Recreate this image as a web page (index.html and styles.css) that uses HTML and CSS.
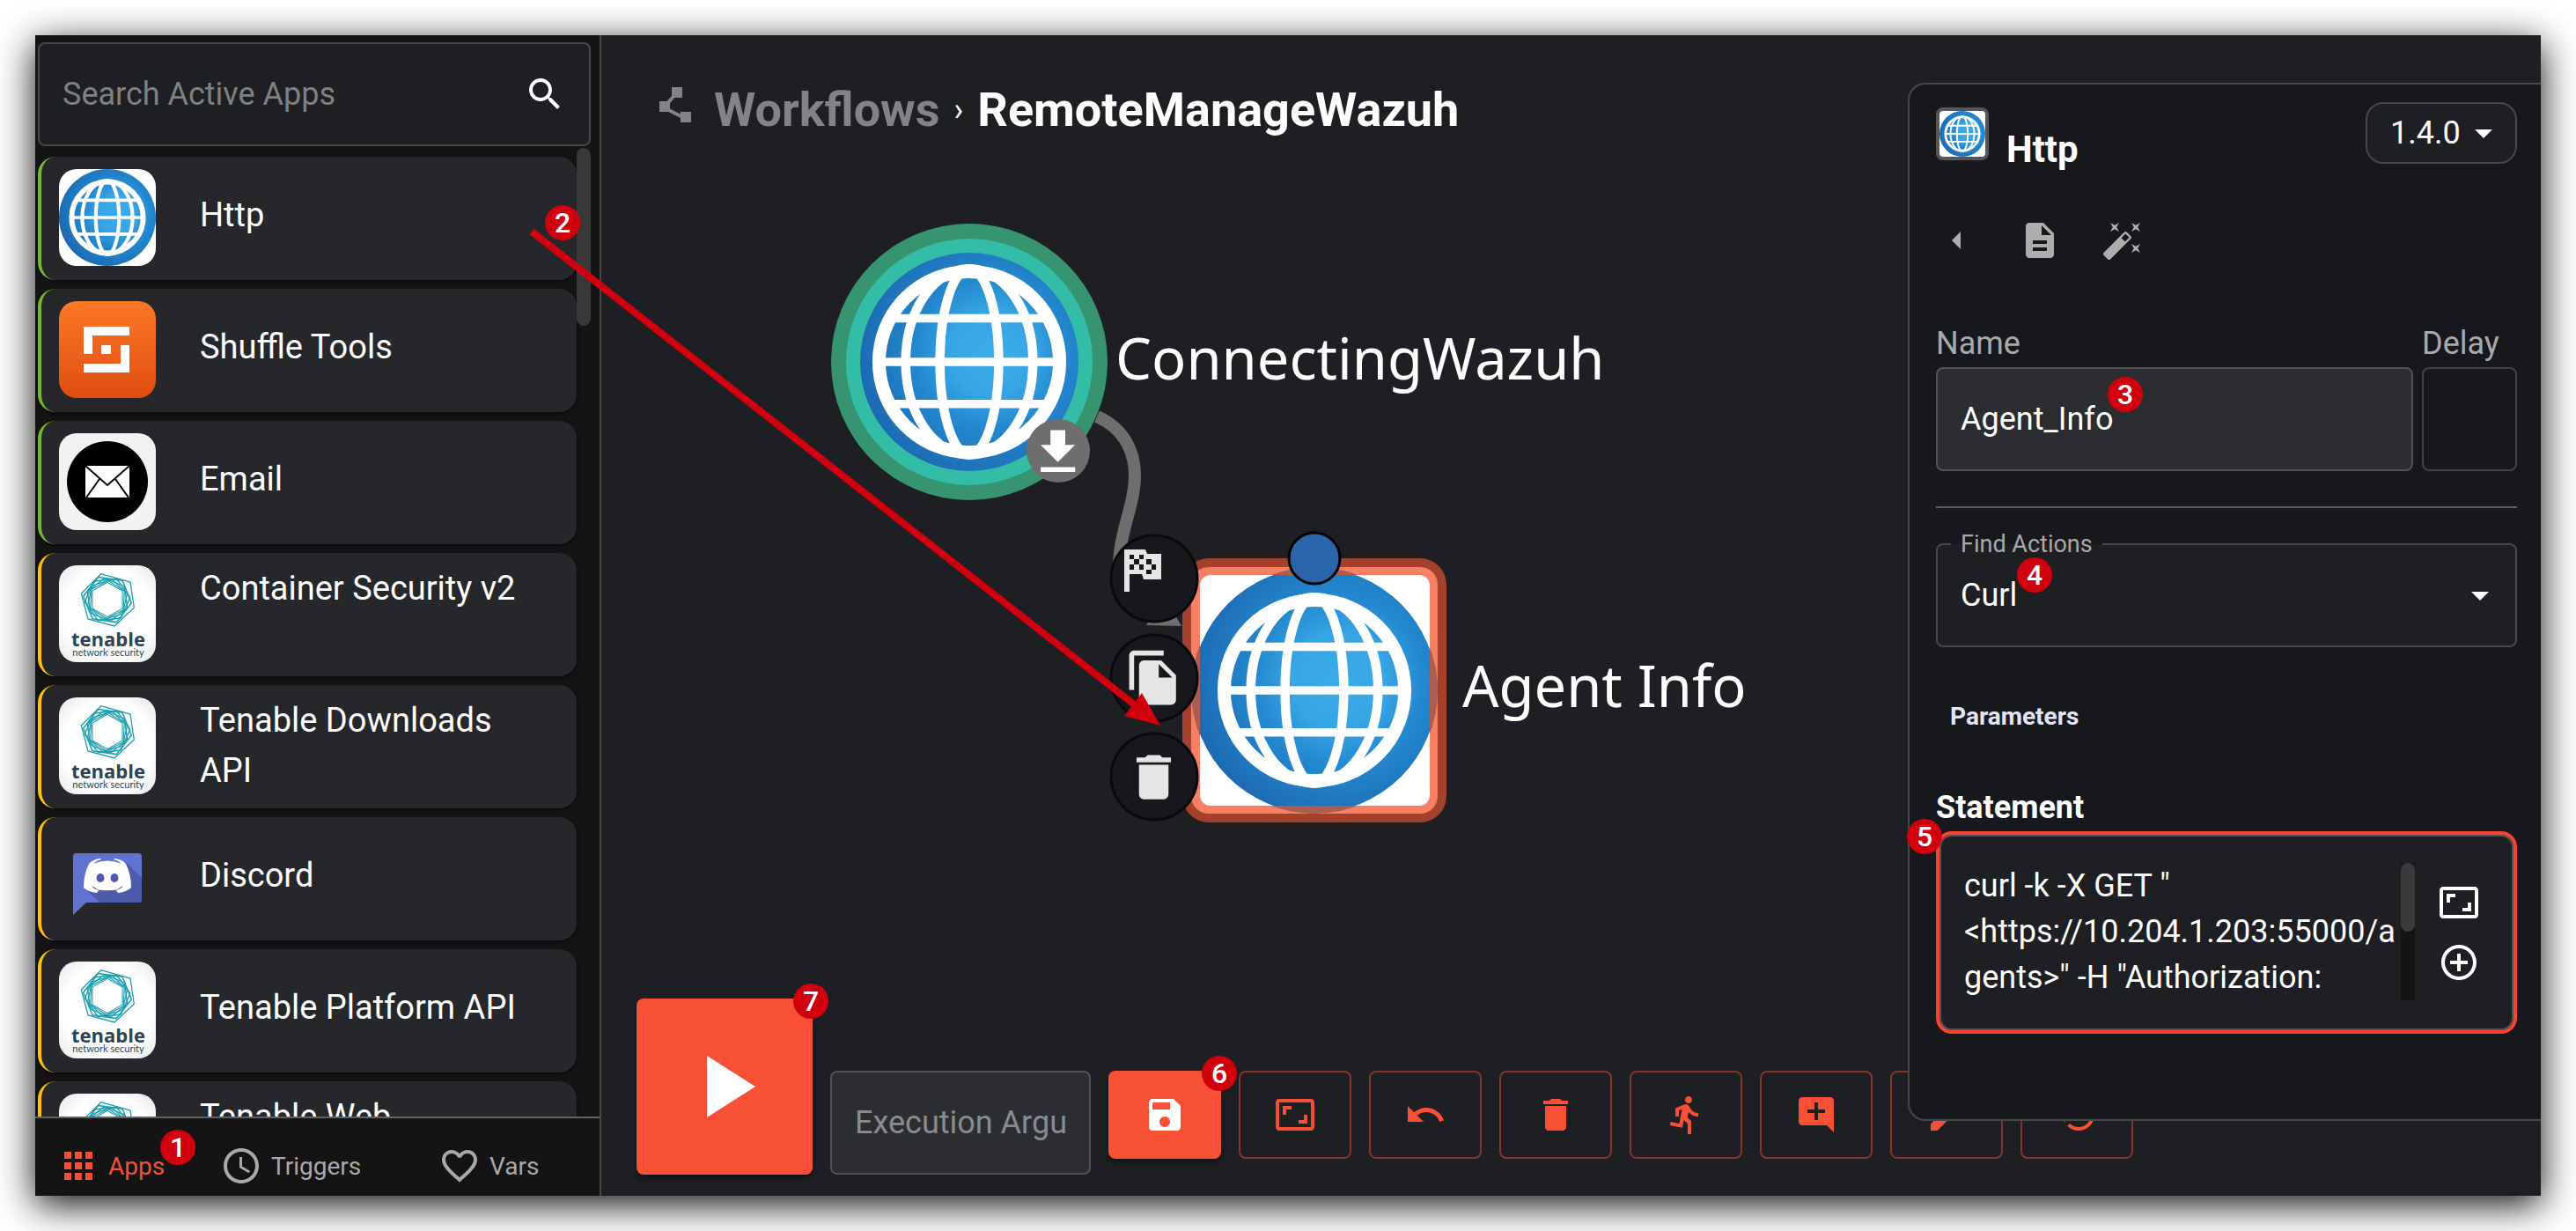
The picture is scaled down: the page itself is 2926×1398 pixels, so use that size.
FILE: index.html
```html
<!DOCTYPE html>
<html lang="en">
<head>
<meta charset="utf-8">
<title>RemoteManageWazuh - Workflows</title>
<link rel="stylesheet" href="styles.css">
</head>
<body>
<svg class="defs" aria-hidden="true">
  <defs>
    <radialGradient id="globe-fill" cx="0.6" cy="0.46" r="0.62">
      <stop offset="0" stop-color="#3aabe9"/>
      <stop offset="0.3" stop-color="#38a6e5"/>
      <stop offset="0.55" stop-color="#2389cf"/>
      <stop offset="1" stop-color="#1c68b0"/>
    </radialGradient>
    <linearGradient id="shuffle-fill" x1="0" y1="0" x2="0" y2="1">
      <stop offset="0" stop-color="#fb7926"/>
      <stop offset="1" stop-color="#e04d12"/>
    </linearGradient>
    <radialGradient id="tenable-fill" r="0.75">
      <stop offset="0.6" stop-color="#ffffff"/>
      <stop offset="1" stop-color="#e2e2e2"/>
    </radialGradient>
    <symbol id="globe-lines" viewBox="0 0 100 100">
      <g fill="none" stroke="#fff">
        <circle cx="50" cy="50" r="36.9" stroke-width="5.4"/>
        <path stroke-width="3.4" d="M14 50H86M18 32.2H82M18 67.2H82"/>
        <ellipse cx="50" cy="50" rx="12" ry="38" stroke-width="3.8"/>
        <ellipse cx="50" cy="50" rx="26" ry="38" stroke-width="3.8"/>
      </g>
    </symbol>
    <symbol id="globe" viewBox="0 0 100 100">
      <rect width="100" height="100" fill="#fff"/>
      <circle cx="50" cy="50" r="50" fill="url(#globe-fill)"/>
      <use href="#globe-lines"/>
    </symbol>
    <symbol id="shuffle" viewBox="0 0 110 110">
      <rect width="110" height="110" fill="url(#shuffle-fill)"/>
      <path fill="#fff" d="M28 29H80V39H38V60H28ZM48 50H59V60H48ZM70 50H80V81H28V71H70Z"/>
    </symbol>
    <symbol id="email" viewBox="0 0 110 110">
      <rect width="110" height="110" fill="#f2f2f2"/>
      <circle cx="55" cy="55" r="46"/>
      <path fill="#fff" d="M30 37H80V73H30Z"/>
      <path fill="none" stroke="#000" stroke-width="2" d="M30 37L55 59L80 37M31 73L46 52M79 73L64 52"/>
    </symbol>
    <symbol id="tenable" viewBox="0 0 110 110">
      <rect width="110" height="110" fill="url(#tenable-fill)"/>
      <g fill="none" stroke="#1b9fb0" stroke-width="1.3" transform="translate(55 39)">
        <path d="M0 -24L20.800 -12V12L0 24L-20.800 12V-12Z" transform="scale(.82)"/>
        <path d="M0 -24L20.800 -12V12L0 24L-20.800 12V-12Z" transform="rotate(3) scale(.9)"/>
        <path d="M0 -24L20.800 -12V12L0 24L-20.800 12V-12Z" transform="rotate(13) scale(.98)"/>
        <path d="M0 -24L20.800 -12V12L0 24L-20.800 12V-12Z" transform="rotate(-8) scale(1.020)"/>
        <path d="M0 -24L20.800 -12V12L0 24L-20.800 12V-12Z" transform="rotate(24) scale(1.080)"/>
        <path d="M0 -24L20.800 -12V12L0 24L-20.800 12V-12Z" transform="rotate(-22) scale(1.150)"/>
        <path d="M-7.300 -29.300L26 -20L30.300 9L8 30L-22 22L-29.700 -7Z"/>
      </g>
      <text class="tenable-name" x="56" y="92" text-anchor="middle">tenable</text>
      <text class="tenable-tag" x="56" y="103" text-anchor="middle">network security</text>
    </symbol>
    <symbol id="discord" viewBox="0 0 110 110">
      <path fill="#6272d1" d="M20 27H90Q94 27 94 31V79Q94 83 90 83H31L16 97V31Q16 27 20 27Z"/>
      <path fill="#4e5ba9" d="M76 37L94 55V79Q94 83 90 83H46L33 70Z"/>
      <path fill="#fff" d="M34 39Q38 34 47 33L48 34Q43 35 39 39Q55 32 71 39Q67 35 62 34L63 33Q72 34 76 39Q82 51 82 66Q77 71 67 72L65 69Q70 68 73 64Q65 68 55 68Q45 68 37 64Q40 68 45 69L43 72Q33 71 28 66Q28 51 34 39Z"/>
      <path fill="#fff" d="M36 62H74L66 68.500Q55 70 44 68.500Z"/>
      <g fill="#4e5ba9"><ellipse cx="47" cy="55" rx="4.500" ry="5"/><ellipse cx="63" cy="55" rx="4.500" ry="5"/></g>
    </symbol>
    <symbol id="aspect" viewBox="0 0 24 24"><path d="M19 12h-2v3h-3v2h5v-5zM7 9h3V7H5v5h2V9zm14-6H3c-1.100 0-2 .9-2 2v14c0 1.100.9 2 2 2h18c1.100 0 2-.9 2-2V5c0-1.100-.9-2-2-2zm0 16.010H3V4.990h18v14.020z"/></symbol>
    <symbol id="trash" viewBox="0 0 24 24"><path d="M6 19c0 1.100.9 2 2 2h8c1.100 0 2-.9 2-2V7H6v12zM19 4h-3.500l-1-1h-5l-1 1H5v2h14V4z"/></symbol>
    <symbol id="caret" viewBox="0 0 24 24"><path d="M7 10l5 5 5-5z"/></symbol>
  </defs>
</svg>

<div class="window">
  <aside class="sidebar">
    <label class="search">
      <input type="search" placeholder="Search Active Apps" aria-label="Search Active Apps">
      <svg class="icon" viewBox="0 0 24 24"><path d="M15.500 14h-.79l-.28-.27C15.410 12.590 16 11.110 16 9.500 16 5.910 13.090 3 9.500 3S3 5.910 3 9.500 5.910 16 9.500 16c1.610 0 3.090-.59 4.230-1.570l.27.28v.79l5 4.990L20.490 19l-4.990-5zm-6 0C7.010 14 5 11.990 5 9.500S7.010 5 9.500 5 14 7.010 14 9.500 11.990 14 9.500 14z"/></svg>
    </label>
    <div class="app-list">
      <article class="app app--active"><svg class="app-logo"><use href="#globe"/></svg><span class="app-name">Http</span><span class="badge badge--app">2</span></article>
      <article class="app app--active"><svg class="app-logo"><use href="#shuffle"/></svg><span class="app-name">Shuffle Tools</span></article>
      <article class="app app--active"><svg class="app-logo"><use href="#email"/></svg><span class="app-name">Email</span></article>
      <article class="app"><svg class="app-logo"><use href="#tenable"/></svg><span class="app-name app-name--tall">Container Security v2</span></article>
      <article class="app"><svg class="app-logo"><use href="#tenable"/></svg><span class="app-name app-name--tall">Tenable Downloads API</span></article>
      <article class="app"><svg class="app-logo"><use href="#discord"/></svg><span class="app-name">Discord</span></article>
      <article class="app"><svg class="app-logo"><use href="#tenable"/></svg><span class="app-name">Tenable Platform API</span></article>
      <article class="app"><svg class="app-logo"><use href="#tenable"/></svg><span class="app-name app-name--tall">Tenable Web</span></article>
      <span class="app-scroll"></span>
    </div>
    <nav class="tabs">
      <a class="tab tab--on" href="#apps"><svg class="icon" viewBox="0 0 24 24"><path d="M4 8h4V4H4v4zm6 12h4v-4h-4v4zm-6 0h4v-4H4v4zm0-6h4v-4H4v4zm6 0h4v-4h-4v4zm6-10v4h4V4h-4zm-6 4h4V4h-4v4zm6 6h4v-4h-4v4zm0 6h4v-4h-4v4z"/></svg>Apps<span class="badge badge--tab">1</span></a>
      <a class="tab" href="#triggers"><svg class="icon" viewBox="0 0 24 24"><path d="M11.990 2C6.470 2 2 6.480 2 12s4.470 10 9.990 10C17.520 22 22 17.520 22 12S17.520 2 11.990 2zM12 20c-4.420 0-8-3.580-8-8s3.580-8 8-8 8 3.580 8 8-3.580 8-8 8zm.5-13H11v6l5.250 3.150.75-1.230-4.500-2.670z"/></svg>Triggers</a>
      <a class="tab" href="#vars"><svg class="icon" viewBox="0 0 24 24"><path d="M16.500 3c-1.740 0-3.410.81-4.500 2.090C10.910 3.810 9.240 3 7.500 3 4.420 3 2 5.420 2 8.500c0 3.780 3.400 6.860 8.550 11.540L12 21.350l1.450-1.320C18.600 15.360 22 12.280 22 8.500 22 5.420 19.580 3 16.500 3zm-4.400 15.550l-.1.1-.1-.1C7.140 14.240 4 11.390 4 8.500 4 6.500 5.500 5 7.500 5c1.540 0 3.040.99 3.570 2.360h1.870C13.460 5.990 14.960 5 16.500 5c2 0 3.500 1.500 3.500 3.500 0 2.890-3.140 5.740-7.900 10.050z"/></svg>Vars</a>
    </nav>
  </aside>

  <main class="main">
    <svg class="graph" viewBox="683 40 1400 920" width="1400" height="920" aria-label="Workflow graph">
      <path fill="none" stroke="#6e6e6e" stroke-width="14" d="M1246 473C1276 486 1289 512 1289 540C1289 574 1271 604 1271 645"/>
      <path fill="#6e6e6e" d="M1302 710L1342 711L1322 676Z"/>
      <circle cx="1101" cy="411" r="157" fill="#369570"/>
      <circle cx="1101" cy="411" r="140" fill="#34bda6"/>
      <circle cx="1101" cy="411" r="124" fill="url(#globe-fill)"/>
      <use href="#globe-lines" x="962" y="272" width="278" height="278"/>
      <circle cx="1202" cy="512" r="36" fill="#6e6e6e"/>
      <path fill="#fff" transform="translate(1168 480) scale(2.800)" d="M19 9h-4V3H9v6H5l7 7 7-7zM5 18v2h14v-2H5z"/>

      <rect x="1343" y="634" width="300" height="300" rx="30" fill="#a4402c"/>
      <rect x="1353" y="644" width="280" height="280" rx="20" fill="#f77f63"/>
      <clipPath id="ring"><rect x="1353" y="644" width="280" height="280" rx="20"/></clipPath>
      <circle cx="1493" cy="784" r="140" fill="#a95e51" clip-path="url(#ring)"/>
      <clipPath id="face"><rect x="1363" y="653" width="261" height="262" rx="12"/></clipPath>
      <g clip-path="url(#face)"><use href="#globe" x="1354" y="645" width="278" height="278"/></g>
      <circle cx="1493" cy="634" r="29" fill="#2a66a9" stroke="#000" stroke-width="3"/>

      <g fill="#17181b" stroke="#0a0a0b" stroke-width="3">
        <circle cx="1311" cy="657" r="49"/><circle cx="1311" cy="770" r="49"/><circle cx="1311" cy="882" r="49"/>
      </g>
      <g fill="#e5e5e5">
        <path fill-rule="evenodd" transform="translate(1277 624)" d="M0 0H24L26 5H42V34H22L20 28H6V48H0ZM6 6V11H11V6ZM17 6V11H22V6ZM11 11V17H17V11ZM25 11V17H31V11ZM6 17V23H11V17ZM17 17V23H22V17ZM31 17V23H36V17ZM25 23V28H31V23Z"/>
        <path transform="translate(1277 736) scale(2.800)" d="M16 1H4c-1.100 0-2 .9-2 2v14h2V3h12V1zm-1 4l6 6v10c0 1.100-.9 2-2 2H7.990C6.890 23 6 22.100 6 21V7c0-1.100.89-2 1.990-2h7zm-1 7h5.500L14 6.500V12z"/>
        <use href="#trash" x="1277" y="849" width="67" height="67"/>
      </g>
      <text class="node-name" x="1267" y="431">ConnectingWazuh</text>
      <text class="node-name" x="1661" y="803">Agent Info</text>
    </svg>

    <header class="crumbs">
      <svg class="icon" viewBox="0 0 24 24"><path d="M15 16v1.260l-6-3v-3.170L11.700 8H16V2h-6v4.900L7.300 10H3v6h5l7 3.500V22h6v-6z"/></svg>
      <a href="#workflows">Workflows</a>
      <span class="crumb-sep">›</span>
      <h1>RemoteManageWazuh</h1>
    </header>

    <div class="toolbar">
      <button class="run" aria-label="Run"><svg viewBox="0 0 24 24"><path d="M8 5v14l11-7z"/></svg><span class="badge badge--corner">7</span></button>
      <div class="toolbar-row">
        <input class="field exec" type="text" placeholder="Execution Argument" aria-label="Execution Argument">
        <button class="tool tool--save" aria-label="Save"><svg class="icon" viewBox="0 0 24 24"><path d="M17 3H5c-1.110 0-2 .9-2 2v14c0 1.100.89 2 2 2h14c1.100 0 2-.9 2-2V7l-4-4zm-5 16c-1.660 0-3-1.340-3-3s1.340-3 3-3 3 1.340 3 3-1.340 3-3 3zm3-10H5V5h10v4z"/></svg><span class="badge badge--corner">6</span></button>
        <button class="tool" aria-label="Fit"><svg class="icon"><use href="#aspect"/></svg></button>
        <button class="tool" aria-label="Undo"><svg class="icon" viewBox="0 0 24 24"><path d="M12.500 8c-2.650 0-5.050.99-6.900 2.600L2 7v9h9l-3.620-3.620c1.390-1.160 3.160-1.880 5.120-1.880 3.540 0 6.550 2.310 7.600 5.500l2.370-.78C21.080 11.030 17.150 8 12.500 8z"/></svg></button>
        <button class="tool" aria-label="Delete"><svg class="icon"><use href="#trash"/></svg></button>
        <button class="tool" aria-label="Executions"><svg class="icon" viewBox="0 0 24 24"><path d="M13.490 5.480c1.100 0 2-.9 2-2s-.9-2-2-2-2 .9-2 2 .9 2 2 2zm-3.600 13.900l1-4.400 2.100 2v6h2v-7.500l-2.100-2 .6-3c1.300 1.500 3.300 2.500 5.500 2.500v-2c-1.900 0-3.500-1-4.300-2.400l-1-1.600c-.4-.6-1-1-1.700-1-.3 0-.5.1-.8.1l-5.200 2.200v4.700h2v-3.400l1.800-.7-1.600 8.100-4.900-1-.4 2 7 1.400z"/></svg></button>
        <button class="tool" aria-label="Comment"><svg class="icon" viewBox="0 0 24 24"><path d="M21.990 4c0-1.100-.89-2-1.990-2H4c-1.100 0-2 .9-2 2v12c0 1.100.9 2 2 2h14l4 4-.01-18zM17 11h-4v4h-2v-4H7V9h4V5h2v4h4v2z"/></svg></button>
        <button class="tool" aria-label="Edit"><svg class="icon" viewBox="0 0 24 24"><path d="M3 17.250V21h3.750L17.810 9.940l-3.750-3.750L3 17.250zM20.710 7.040c.39-.39.39-1.020 0-1.410l-2.340-2.340c-.39-.39-1.020-.39-1.410 0l-1.830 1.830 3.750 3.750 1.830-1.830z"/></svg></button>
        <button class="tool" aria-label="History"><svg class="icon" viewBox="0 0 24 24"><path d="M13 3c-4.970 0-9 4.030-9 9H1l3.890 3.890.07.14L9 12H6c0-3.870 3.130-7 7-7s7 3.130 7 7-3.130 7-7 7c-1.930 0-3.680-.79-4.940-2.060l-1.420 1.420C8.270 19.990 10.510 21 13 21c4.970 0 9-4.030 9-9s-4.030-9-9-9z"/></svg></button>
      </div>
    </div>

    <section class="panel">
      <div class="panel-head">
        <svg class="panel-logo"><use href="#globe"/></svg>
        <h2>Http</h2>
        <div class="select-wrap version">
          <select aria-label="Version"><option>1.4.0</option></select>
          <svg class="icon"><use href="#caret"/></svg>
        </div>
      </div>
      <div class="panel-tools">
        <button aria-label="Back"><svg class="icon" viewBox="0 0 24 24"><path d="M14 7l-5 5 5 5V7z"/></svg></button>
        <button aria-label="Documentation"><svg class="icon" viewBox="0 0 24 24"><path d="M14 2H6c-1.100 0-1.990.9-1.990 2L4 20c0 1.100.89 2 1.990 2H18c1.100 0 2-.9 2-2V8l-6-6zm2 16H8v-2h8v2zm0-4H8v-2h8v2zm-3-5V3.500L18.500 9H13z"/></svg></button>
        <button aria-label="Auto fix"><svg class="icon" viewBox="0 0 24 24"><path d="M7.500 5.600L10 7 8.600 4.500 10 2 7.500 3.400 5 2l1.400 2.500L5 7zm12 9.800L17 14l1.400 2.500L17 19l2.500-1.400L22 19l-1.400-2.500L22 14zM22 2l-2.500 1.400L17 2l1.400 2.500L17 7l2.500-1.400L22 7l-1.400-2.500zm-7.630 5.290c-.39-.39-1.020-.39-1.410 0L1.290 18.960c-.39.39-.39 1.020 0 1.410l2.340 2.340c.39.39 1.020.39 1.410 0L16.700 11.050c.39-.39.39-1.020 0-1.410l-2.330-2.350zm-1.030 5.490l-2.120-2.120 2.440-2.440 2.120 2.120-2.440 2.440z"/></svg></button>
      </div>
      <div class="name-row">
        <div class="name-cell"><label for="name">Name</label><input class="field" id="name" type="text" value="Agent_Info"><span class="badge badge--name">3</span></div>
        <div class="name-cell"><label for="delay">Delay</label><input class="field field--dark" id="delay" type="text"></div>
      </div>
      <hr>
      <div class="select-wrap actions">
        <label for="action">Find Actions</label>
        <select id="action"><option>Curl</option></select>
        <svg class="icon"><use href="#caret"/></svg>
        <span class="badge badge--action">4</span>
      </div>
      <h3>Parameters</h3>
      <label class="statement-label" for="statement">Statement</label>
      <div class="statement">
        <textarea id="statement" rows="3">curl -k -X GET "
&lt;https://10.204.1.203:55000/a
gents&gt;" -H "Authorization:</textarea>
        <span class="statement-scroll"><span></span></span>
        <div class="statement-tools">
          <button aria-label="Expand"><svg class="icon"><use href="#aspect"/></svg></button>
          <button aria-label="Add"><svg class="icon" viewBox="0 0 24 24"><path d="M13 7h-2v4H7v2h4v4h2v-4h4v-2h-4V7zm-1-5C6.480 2 2 6.480 2 12s4.480 10 10 10 10-4.480 10-10S17.520 2 12 2zm0 18c-4.410 0-8-3.590-8-8s3.590-8 8-8 8 3.590 8 8-3.590 8-8 8z"/></svg></button>
        </div>
        <span class="badge badge--statement">5</span>
      </div>
    </section>
  </main>

  <svg class="pointer" viewBox="40 40 1300 800" width="1300" height="800" aria-hidden="true">
    <path fill="none" stroke="#d0000f" stroke-width="8" d="M604 263L1292 803"/>
    <path fill="#d0000f" d="M1318 824L1297 787L1277 813Z"/>
  </svg>
</div>
</body>
</html>
```
FILE: styles.css
```css
* { box-sizing: border-box; }

body {
  margin: 0;
  background: #fff;
  color: #fff;
  font-family: Roboto, "Liberation Sans", sans-serif;
  font-size: 36px;
}

button, input, select, textarea { font: inherit; color: inherit; margin: 0; }
button { padding: 0; border: 0; background: none; cursor: pointer; }
a { color: inherit; text-decoration: none; }
h1, h2, h3 { margin: 0; }

.defs { position: absolute; width: 0; height: 0; }
.icon { display: block; flex: none; width: 48px; height: 48px; fill: currentColor; }

.window {
  position: relative;
  display: flex;
  height: calc(100vh - 80px);
  margin: 40px;
  background: #1e1f23;
  box-shadow: 0 10px 40px rgba(0, 0, 0, 0.95);
}

.badge {
  position: absolute;
  z-index: 3;
  width: 40px;
  height: 40px;
  border-radius: 50%;
  background: #d0000f;
  color: #fff;
  font-size: 32px;
  font-weight: 500;
  line-height: 40px;
  text-align: center;
}
.badge--app { right: -4px; top: 55px; }
.badge--tab { left: 117px; top: -17px; }
.badge--corner { right: -18px; top: -17px; }
.badge--name { left: 195px; bottom: 67px; }
.badge--action { left: 90px; top: 14px; }
.badge--statement { left: -37px; top: -18px; }

/* Sidebar */
.sidebar {
  display: flex;
  flex: none;
  flex-direction: column;
  width: 643px;
  padding-top: 8px;
  border-right: 2px solid #46474b;
  background: #141414;
}
.search {
  display: flex;
  align-items: center;
  height: 118px;
  margin: 0 10px 0 3px;
  padding: 0 26px;
  border: 2px solid #46474b;
  border-radius: 8px;
  background: #1e1f23;
}
.search input {
  flex: 1;
  min-width: 0;
  padding: 0;
  border: 0;
  outline: 0;
  background: none;
}
.search input::placeholder { color: #7f8082; opacity: 1; }

.app-list {
  position: relative;
  display: flex;
  flex: 1;
  flex-direction: column;
  gap: 10px;
  min-height: 0;
  padding: 12px 26px 0 3px;
  overflow: hidden;
}
.app {
  position: relative;
  display: flex;
  flex: none;
  align-items: center;
  gap: 50px;
  height: 140px;
  padding: 0 40px 2px 20px;
  border-left: 4px solid #ffc107;
  border-radius: 20px;
  background: #26272b;
  box-shadow: 0 2px 4px rgba(0, 0, 0, 0.5);
}
.app--active { border-left-color: #76b82f; }
.app-logo { flex: none; width: 110px; height: 110px; border-radius: 20px; }
.app-name { padding-bottom: 6px; font-size: 38px; line-height: 57px; }
.app-name--tall { min-height: 114px; padding-bottom: 0; }
.app-scroll {
  position: absolute;
  top: 2px;
  right: 10px;
  width: 16px;
  height: 202px;
  border-radius: 8px;
  background: #383838;
}
.tenable-name { fill: #2f4254; font: 700 22px "Open Sans", sans-serif; }
.tenable-tag { fill: #2f4254; font: 400 11px Lato, sans-serif; }

.tabs {
  display: grid;
  flex: none;
  grid-template-columns: 185px 248px 1fr;
  height: 90px;
  padding: 30px 0 0 25px;
  border-top: 2px solid #606164;
}
.tab {
  position: relative;
  display: flex;
  gap: 10px;
  height: 48px;
  color: #a9a9a9;
  font-size: 28px;
  line-height: 50px;
}
.tab--on { color: #f85035; }

/* Canvas */
.main { position: relative; display: flex; flex: 1; flex-direction: column; min-width: 0; overflow: hidden; }
.graph { position: absolute; left: 0; top: 0; }
.node-name { fill: #fff; font: 400 65px "Noto Sans", sans-serif; }

.crumbs {
  position: relative;
  display: flex;
  gap: 16px;
  padding: 53px 60px 0;
  font-size: 54px;
  font-weight: 700;
  line-height: 64px;
}
.crumbs .icon { margin: 2px 4px 0 0; }
.crumbs .icon, .crumbs a { color: #828385; }
.crumbs h1 { font: inherit; }
.crumb-sep { font-size: 36px; font-weight: 400; }

.toolbar {
  position: relative;
  display: flex;
  gap: 20px;
  align-items: flex-end;
  margin-top: auto;
  padding: 0 40px 24px;
}
.run {
  position: relative;
  flex: none;
  width: 200px;
  height: 200px;
  border-radius: 8px;
  background: #f85035;
  box-shadow: 0 4px 6px rgba(0, 0, 0, 0.4);
}
.run svg { display: block; width: 120px; height: 120px; margin: auto; fill: #fff; }
.toolbar-row { display: flex; gap: 20px; align-items: flex-start; }
.tool {
  position: relative;
  display: grid;
  flex: none;
  place-items: center;
  width: 128px;
  height: 100px;
  border: 2px solid #813629;
  border-radius: 8px;
  color: #f85035;
}
.tool--save { border: 0; background: #f85035; color: #fff; box-shadow: 0 4px 6px rgba(0, 0, 0, 0.4); }

.field {
  display: block;
  width: 100%;
  height: 118px;
  padding: 0 26px;
  border: 2px solid #515256;
  border-radius: 8px;
  outline: 0;
  background: #2c2d31;
}
.field::placeholder { color: #8a8b8d; opacity: 1; }
.field--dark { border-color: #414246; background: #17181c; }
.exec { width: 296px; }

/* Action panel */
.panel {
  position: absolute;
  top: 54px;
  right: 0;
  width: 719px;
  min-height: 1179px;
  padding: 20px 27px 0 30px;
  border: 2px solid #47484c;
  border-right: 0;
  border-radius: 20px 0 0 20px;
  background: #17181c;
}
.panel-head { display: flex; gap: 20px; align-items: flex-start; height: 70px; }
.panel-logo {
  flex: none;
  width: 60px;
  height: 60px;
  margin-top: 6px;
  border: 4px solid #555658;
  border-radius: 8px;
}
.panel-head h2 { margin-top: 24px; font-size: 42px; font-weight: 700; line-height: 60px; }

.select-wrap { position: relative; border: 2px solid #47484c; background: #1e1f23; }
.select-wrap select {
  display: block;
  width: 100%;
  height: 100%;
  padding: 0 26px;
  border: 0;
  outline: 0;
  appearance: none;
  background: none;
}
.select-wrap .icon { position: absolute; right: 12px; top: 50%; margin-top: -24px; pointer-events: none; }
.version { width: 172px; height: 70px; margin-left: auto; border-radius: 20px; }

.panel-tools { display: flex; gap: 46px; margin-top: 63px; color: #acadad; }

.name-row { display: grid; grid-template-columns: 1fr 108px; gap: 10px; margin-top: 72px; }
.name-cell { position: relative; }
.name-cell label { display: block; height: 48px; color: #a9a9aa; line-height: 42px; }

hr { height: 2px; margin: 40px 0; border: 0; background: #5d5e61; }

.actions { height: 118px; border-radius: 8px; }
.actions label {
  position: absolute;
  left: 15px;
  top: -19px;
  padding: 0 11px;
  background: linear-gradient(#17181c 50%, #1e1f23 50%);
  color: #a9a9aa;
  font-size: 27px;
  line-height: 36px;
}
.actions .icon { right: 16px; }

h3 { margin: 61px 0 0 16px; color: #e4e4f4; font-size: 28px; font-weight: 700; line-height: 36px; }
.statement-label { display: block; margin-top: 64px; font-weight: 700; line-height: 42px; }
.statement {
  position: relative;
  display: flex;
  height: 230px;
  margin-top: 6px;
  padding: 32px 38px 0 28px;
  border: 4px solid #f84330;
  border-radius: 18px;
  background: #1e1f23;
  box-shadow: inset 0 0 0 2px #515256;
}
.statement textarea {
  flex: 1;
  min-width: 0;
  height: 156px;
  padding: 0;
  border: 0;
  outline: 0;
  background: none;
  line-height: 52px;
  overflow: hidden;
  resize: none;
}
.statement-scroll { flex: none; width: 16px; height: 156px; background: #141414; }
.statement-scroll span { display: block; height: 78px; border-radius: 8px; background: #3a3a3a; }
.statement-tools { display: flex; flex: none; flex-direction: column; gap: 20px; margin: 21px 0 0 26px; }

.pointer { position: absolute; left: 0; top: 0; z-index: 2; pointer-events: none; }
```
